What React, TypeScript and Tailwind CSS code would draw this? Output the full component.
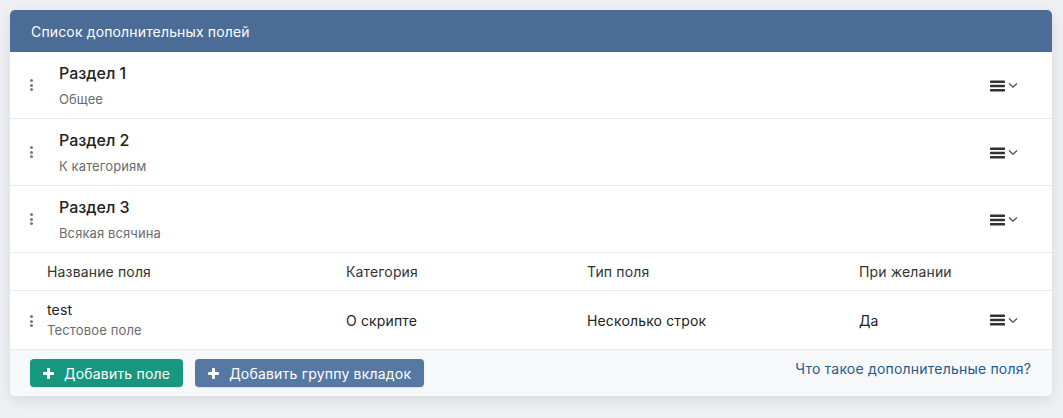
import React from "react";

const Handle = () => (
  <div className="flex flex-col gap-[1.5px] w-[3px]">
    <span className="block w-[3px] h-[3px] rounded-full bg-[#7a7a7a]" />
    <span className="block w-[3px] h-[3px] rounded-full bg-[#7a7a7a]" />
    <span className="block w-[3px] h-[3px] rounded-full bg-[#7a7a7a]" />
  </div>
);

const Menu = () => (
  <div className="flex items-center gap-[3px] text-[#333]">
    <svg width="15" height="12" viewBox="0 0 15 12">
      <rect x="0" y="0.5" width="15" height="2.4" rx="0.6" fill="#333" />
      <rect x="0" y="4.8" width="15" height="2.4" rx="0.6" fill="#333" />
      <rect x="0" y="9.1" width="15" height="2.4" rx="0.6" fill="#333" />
    </svg>
    <svg width="10" height="7" viewBox="0 0 10 7">
      <path d="M1 1.5 L5 5.2 L9 1.5" fill="none" stroke="#444" strokeWidth="1.1" />
    </svg>
  </div>
);

const Section = ({ title, sub }: { title: string; sub: string }) => (
  <div className="flex items-center h-[67px] border-b border-[#e8eaed] pl-[20px] pr-[34px]">
    <Handle />
    <div className="ml-[26px] flex flex-col">
      <div className="text-[16px] leading-[20px] font-medium text-[#222]">{title}</div>
      <div className="mt-[8px] text-[13px] leading-[16px] text-[#6b6b6b] tracking-[0.1px]">{sub}</div>
    </div>
    <div className="ml-auto mt-[1px]">
      <Menu />
    </div>
  </div>
);

export default function App() {
  return (
    <div
      className="min-h-[418px] bg-[#eef0f3] p-[10px] pt-[10px]"
      style={{ fontFamily: "Inter, 'Noto Sans', sans-serif" }}
    >
      <div className="w-[1042px] rounded-[5px] bg-white shadow-[0_4px_14px_rgba(0,0,0,0.10)] overflow-hidden">
        <div className="h-[42px] bg-[#4a6c96] flex items-center px-[21px] text-white text-[14px] tracking-[0.15px]">
          Список дополнительных полей
        </div>
        <Section title="Раздел 1" sub="Общее" />
        <Section title="Раздел 2" sub="К категориям" />
        <Section title="Раздел 3" sub="Всякая всячина" />
        <div className="flex items-center h-[38px] border-b border-[#e8eaed] text-[14px] text-[#333] tracking-[0.15px]">
          <div className="w-[336px] pl-[37px]">Название поля</div>
          <div className="w-[241px]">Категория</div>
          <div className="w-[272px]">Тип поля</div>
          <div>При желании</div>
        </div>
        <div className="flex items-center h-[58px] text-[14px] text-[#222] pr-[34px] tracking-[0.15px]">
          <div className="w-[336px] flex items-center pl-[20px]">
            <div className="mt-[2px]">
              <Handle />
            </div>
            <div className="ml-[14px] flex flex-col">
              <div className="leading-[18px]">test</div>
              <div className="mt-[2px] leading-[18px] text-[13px] text-[#6b6b6b]">Тестовое поле</div>
            </div>
          </div>
          <div className="w-[241px]">О скрипте</div>
          <div className="w-[272px]">Несколько строк</div>
          <div>Да</div>
          <div className="ml-auto">
            <Menu />
          </div>
        </div>
        <div className="h-[47px] bg-[#f6f8fa] border-t border-[#e8eaed] flex items-center pl-[20px] pr-[21px] gap-[12px] tracking-[0.2px]">
          <button className="h-[28px] px-[13px] rounded-[4px] bg-[#17977d] text-white text-[14px] flex items-center gap-[10px] shadow-[0_1px_1px_rgba(0,0,0,0.1)]">
            <svg width="11" height="11" viewBox="0 0 11 11">
              <rect x="4" y="0" width="3" height="11" rx="0.8" fill="#fff" />
              <rect x="0" y="4" width="11" height="3" rx="0.8" fill="#fff" />
            </svg>
            Добавить поле
          </button>
          <button className="h-[28px] px-[13px] rounded-[4px] bg-[#5579a2] text-white text-[14px] flex items-center gap-[10px] shadow-[0_1px_1px_rgba(0,0,0,0.1)]">
            <svg width="11" height="11" viewBox="0 0 11 11">
              <rect x="4" y="0" width="3" height="11" rx="0.8" fill="#fff" />
              <rect x="0" y="4" width="11" height="3" rx="0.8" fill="#fff" />
            </svg>
            Добавить группу вкладок
          </button>
          <a className="ml-auto text-[14px] text-[#245b8f] -mt-[10px]">Что такое дополнительные поля?</a>
        </div>
      </div>
    </div>
  );
}
